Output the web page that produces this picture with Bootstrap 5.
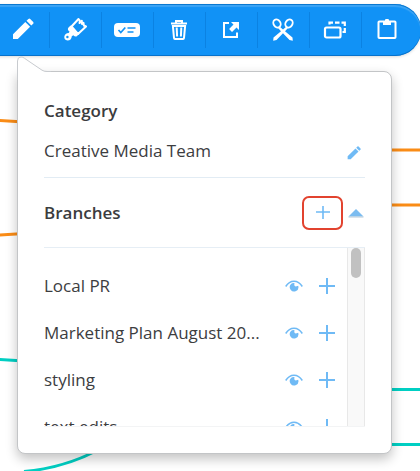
<!DOCTYPE html>
<html lang="en">
<head>
<meta charset="utf-8">
<meta name="viewport" content="width=device-width, initial-scale=1">
<title>Branches</title>
<link href="https://cdn.jsdelivr.net/npm/bootstrap@5.3.0/dist/css/bootstrap.min.css" rel="stylesheet">
<style>
body{font-family:"Open Sans","Noto Sans",sans-serif;font-size:17px;line-height:24px;color:#3c3d3f;background:#fff}
.stage{overflow:hidden;min-height:100vh}
.wires{left:0;top:0;width:100%;height:471px;pointer-events:none}
.toolbar{height:52px;margin:4px -1px 0 -3px;padding:0 8px 4px 0;background:#1192f6;border-radius:0 26px 26px 0;box-shadow:inset 0 1px 0 #0a78d0,inset 0 3px 1px #3ba4f5,inset 0 -1px 0 #0872cb,0 1px 3px rgba(0,0,0,.15)}
.tool{min-width:0;flex:1 1 0;border:0;border-radius:0;color:#fff}
.tool + .tool{background:linear-gradient(#0b82e2,#0b82e2) 0 8px/1px 36px no-repeat}
.tool:hover{color:#e3f2ff}
.panel{margin:15px 28px 18px 17px;padding:27px 26px 26px;background:#fff;border:1px solid #c3c5c7;border-radius:0 8px 8px 8px;box-shadow:0 5px 12px rgba(0,0,0,.24)}
.tail{left:-1px;top:-16px}
.category{padding-bottom:14px;border-bottom:1px solid #e2ecf4}
.branch-head{height:70px;border-bottom:1px solid #e6eef5}
h2{font-size:17px;line-height:24px;font-weight:600;margin:0;color:#3b3c3e}
.flat{background:none;border:0;padding:0;line-height:0;color:#6fbaf5}
.marked{width:41px;height:34px;border:2px solid #e2432f;border-radius:7px}
.branch-list{height:179px;border-bottom:1px solid #f3f4f5}
.rows{padding:14px 0 0}
.branch{height:47px;padding-right:12px}
.track{width:18px;background:#f9f9f9;border:1px solid #e8e8e8;border-width:0 1px}
.thumb{width:10px;height:30px;border-radius:5px;background:#c1c1c1}
</style>
<script src="https://cdn.jsdelivr.net/npm/bootstrap@5.3.0/dist/js/bootstrap.bundle.min.js"></script>
</head>
<body>
<svg width="0" height="0" class="position-absolute" aria-hidden="true">
<defs>
<symbol id="pencil" viewBox="0 0 22 22"><path d="M1 16.200 13.300 4l4.800 4.800L5.800 21H1zM14.500 2.800 16.400.9q.9-.7 1.800 0l3 3q.8.9 0 1.800L19.300 7.600z" fill="currentColor"/></symbol>
<symbol id="eye" viewBox="0 0 18 12"><path d="M.7 6.500Q4 1.200 9 1.200t8.300 5.300" fill="none" stroke="currentColor" stroke-width="1.500"/><path d="M6 4.100a4.300 4.300 0 1 0 7.200 1.700L10.800 6.500Q8.600 6 9.600 3.200 7.300 2.800 6 4.100z" fill="currentColor"/></symbol>
<symbol id="plus" viewBox="0 0 16 16"><path d="M0 8h16M8 0v16" stroke="currentColor" stroke-width="2"/></symbol>
</defs>
</svg>
<div class="stage position-relative">
<svg class="wires position-absolute" aria-hidden="true" fill="none" stroke-width="3">
<g stroke="#fa8c16"><path d="M-1 120.500 40 123M-1 235 40 232.500"/></g>
<g stroke="#00cfc3"><path d="M-1 359.500 40 362M24 471.500Q64 468 98 450"/></g>
<line x1="80%" x2="100%" y1="150" y2="150" stroke="#fa8c16"/>
<line x1="80%" x2="100%" y1="205" y2="205" stroke="#fa8c16"/>
<line x1="80%" x2="100%" y1="389.500" y2="389.500" stroke="#00cfc3"/>
<line x1="80%" x2="100%" y1="444.500" y2="444.500" stroke="#00cfc3"/>
</svg>
<nav class="toolbar d-flex position-relative" aria-label="Node tools">
<button class="tool btn p-0" type="button" aria-label="Edit"><svg width="22" height="22"><use href="#pencil"/></svg></button>
<button class="tool btn p-0" type="button" aria-label="Format"><svg width="24" height="24" viewBox="0 0 24 24" fill="none" stroke="currentColor"><path d="M8.500 9.500 15.500 2q2 1.500 1 4l2.300-2.300L19 7l1.500-1.200.3 2.700 2.200 1L15 17z" stroke-width="2" stroke-linejoin="round"/><path d="M7.500 8.500 16 17l-2.200 2.300q-1.800.8-3.500-1l-1.500 1q-.3 4.200-4.300 4.200-3.600-.5-3.200-4 .8-3 4.300-3.400l1-1.400Q4 13 5.300 10.800z" fill="currentColor" stroke="none"/><circle cx="4.400" cy="20" r="1.200" fill="#1192f6" stroke="none"/></svg></button>
<button class="tool btn p-0" type="button" aria-label="Task"><svg width="26" height="16" viewBox="0 0 26 16"><rect y="1" width="26" height="14" rx="4" fill="currentColor"/><path d="m4.500 8 2.300 2.500 4.500-5M13.500 6h8M13.500 10h6" fill="none" stroke="#1192f6" stroke-width="1.700"/></svg></button>
<button class="tool btn p-0" type="button" aria-label="Delete"><svg width="18" height="20" viewBox="0 0 18 20" fill="none" stroke="currentColor"><path d="M1 3.500h16M6 3V1h6v2" stroke-width="2"/><path d="M2.900 6h12.200L14 18q-.1 1-1 1H5q-.9 0-1-1z" stroke-width="2"/><path d="m6.700 7.500.4 9M11.300 7.500l-.4 9" stroke-width="2"/></svg></button>
<button class="tool btn p-0" type="button" aria-label="Open"><svg width="18" height="18" viewBox="0 0 18 18"><path d="M7 2H2v14h13v-4.500" fill="none" stroke="currentColor" stroke-width="2"/><path d="M9 1h8v8l-2.500-2.500-4.500 4.400-2.900-2.900L11.500 3.500z" fill="currentColor"/></svg></button>
<button class="tool btn p-0" type="button" aria-label="Cut"><svg width="22" height="23" viewBox="0 0 22 23"><g fill="none" stroke="currentColor" stroke-width="1.900"><ellipse cx="5" cy="5.500" rx="3.400" ry="4.200" transform="rotate(-35 5 5.500)"/><ellipse cx="17" cy="5.500" rx="3.400" ry="4.200" transform="rotate(35 17 5.500)"/></g><path d="m7.500 8.500 3.500 3 3.500-3 1.500 1.500-3 3.300 7.500 6.200.3 3.300-3.300-.8L11 15.300 4.500 22l-3.300.8.300-3.300L9 13.300 6 10z" fill="currentColor"/></svg></button>
<button class="tool btn p-0" type="button" aria-label="Copy"><svg width="24" height="20" viewBox="0 0 24 20" fill="none" stroke="currentColor" stroke-width="2.200"><rect x="2" y="7.500" width="15.500" height="10" rx="1.500"/><path d="M6.500 4.500V2.700H10M12 2.700h4.500M18.500 2.700h3.300V6M21.800 8v4h-2.300"/></svg></button>
<button class="tool btn p-0" type="button" aria-label="Paste"><svg width="20" height="22" viewBox="0 0 20 22"><rect x="1.500" y="3.500" width="17" height="16.500" rx=".8" fill="none" stroke="currentColor" stroke-width="2"/><path d="M6 3.500h2V2q.2-1 1-1h2q.8 0 1 1v1.500h2V7H6z" fill="currentColor"/></svg></button>
</nav>
<main class="panel position-relative">
<svg class="tail position-absolute" width="34" height="24" viewBox="0 0 34 24" aria-hidden="true"><path d="M.5 24V5Q.5 1 4 1q2 0 3.500 1.300L25 14.200q2 1.300 5 1.300h4V24z" fill="#fff"/><path d="M.5 24V5Q.5 1 4 1q2 0 3.500 1.300L25 14.200q2 1.300 5 1.300h4" fill="none" stroke="#c8cbcf"/></svg>
<section class="category">
<h2>Category</h2>
<div class="d-flex align-items-center justify-content-between mt-3"><span>Creative Media Team</span><button class="flat me-1 mt-1" type="button" aria-label="Edit category"><svg width="14" height="14"><use href="#pencil"/></svg></button></div>
</section>
<section>
<div class="branch-head d-flex align-items-center">
<h2 class="me-auto">Branches</h2>
<button class="flat marked" type="button" aria-label="Add branch"><svg width="14" height="14" viewBox="0 0 14 14"><path d="M0 6h14M7 0v13" stroke="currentColor" stroke-width="1.600"/></svg></button>
<button class="flat ms-1" type="button" aria-label="Collapse branches"><svg width="18" height="10" viewBox="0 0 18 10"><path d="M9 1 16.500 8.500h-15z" fill="#7bbcf0"/><path d="M1.500 9h15" stroke="#b5c8d6"/></svg></button>
</div>
<div class="branch-list d-flex overflow-hidden">
<ul class="rows list-unstyled flex-grow-1 mb-0">
<li class="branch d-flex align-items-center"><span class="me-auto">Local PR</span><button class="flat ms-3" type="button" aria-label="View Local PR"><svg width="18" height="12"><use href="#eye"/></svg></button><button class="flat ms-3" type="button" aria-label="Add to Local PR"><svg width="16" height="16"><use href="#plus"/></svg></button></li>
<li class="branch d-flex align-items-center"><span class="me-auto text-nowrap">Marketing Plan August 20...</span><button class="flat ms-3" type="button" aria-label="View Marketing Plan"><svg width="18" height="12"><use href="#eye"/></svg></button><button class="flat ms-3" type="button" aria-label="Add to Marketing Plan"><svg width="16" height="16"><use href="#plus"/></svg></button></li>
<li class="branch d-flex align-items-center"><span class="me-auto">styling</span><button class="flat ms-3" type="button" aria-label="View styling"><svg width="18" height="12"><use href="#eye"/></svg></button><button class="flat ms-3" type="button" aria-label="Add to styling"><svg width="16" height="16"><use href="#plus"/></svg></button></li>
<li class="branch d-flex align-items-center"><span class="me-auto">text edits</span><button class="flat ms-3" type="button" aria-label="View text edits"><svg width="18" height="12"><use href="#eye"/></svg></button><button class="flat ms-3" type="button" aria-label="Add to text edits"><svg width="16" height="16"><use href="#plus"/></svg></button></li>
</ul>
<div class="track flex-shrink-0 d-flex justify-content-center" aria-hidden="true"><div class="thumb"></div></div>
</div>
</section>
</main>
</div>
</body>
</html>
